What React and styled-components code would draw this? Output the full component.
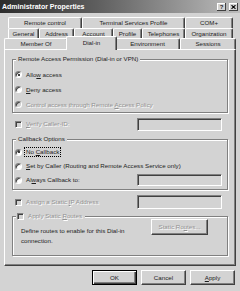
import React from 'react';
import styled, { createGlobalStyle } from 'styled-components';

const GlobalStyle = createGlobalStyle`
  html, body {
    margin: 0;
    padding: 0;
    background: #d3d3d3;
  }
  body {
    font-family: "Liberation Sans", Arial, sans-serif;
  }
`;

const Window = styled.div`
  width: 240px;
  height: 291px;
  overflow: hidden;
  background: #d3d3d3;
  color: #1c1c1c;
  font-size: 6.2px;
  line-height: 8px;
  display: flex;
  flex-direction: column;
`;

/* ── TITLE BAR ── */
const TitleBar = styled.div`
  flex: none;
  height: 13px;
  display: flex;
  align-items: center;
  padding: 0 2px 0 2px;
  background: linear-gradient(to right, #2c2c2c 0%, #5e5e5e 40%, #bdbdbd 100%);
`;

const Title = styled.div`
  flex: 1;
  color: #fff;
  font-weight: bold;
  font-size: 7px;
  white-space: nowrap;
`;

const CaptionButton = styled.div`
  width: 9px;
  height: 8px;
  margin-left: ${p => p.$gap}px;
  box-sizing: border-box;
  background: #d3d3d3;
  box-shadow: inset -1px -1px 0 #404040, inset 1px 1px 0 #fff;
  display: flex;
  align-items: center;
  justify-content: center;
  font-weight: bold;
  font-size: 6px;
  line-height: 6px;
`;

/* ── TABS ── */
const Tabs = styled.div`
  flex: none;
  margin-top: 4px;
  display: flex;
  flex-direction: column;
`;

const TabRow = styled.div`
  display: flex;
  align-items: flex-end;
  height: ${p => p.$h}px;
  margin-left: ${p => p.$inset}px;
`;

const Tab = styled.div`
  flex: none;
  width: ${p => p.$w}px;
  height: 100%;
  box-sizing: border-box;
  display: flex;
  align-items: center;
  justify-content: center;
  white-space: nowrap;
  border-top: 1px solid #fff;
  border-left: 1px solid #fff;
  border-right: 1px solid #404040;
  border-radius: 2px 2px 0 0;
  box-shadow: inset -1px 0 0 #808080;
`;

const ActiveTab = styled(Tab)`
  height: 14px;
  margin: 0 -2px -1px;
  padding-bottom: 1px;
  position: relative;
  z-index: 2;
  background: #d3d3d3;
`;

/* ── PANEL ── */
const Panel = styled.div`
  flex: none;
  margin: 0 4px;
  height: 217px;
  box-sizing: border-box;
  border-top: 1px solid #fff;
  border-left: 1px solid #fff;
  border-right: 1px solid #404040;
  border-bottom: 1px solid #404040;
  box-shadow: inset -1px -1px 0 #808080;
  padding: 0 7px;
  display: flex;
  flex-direction: column;
`;

const GroupBox = styled.div`
  position: relative;
  margin-top: ${p => p.$mt}px;
  padding: ${p => p.$pad};
  border: 1px solid #808080;
  box-shadow: inset 1px 1px 0 #fff, 1px 1px 0 #fff;
  display: flex;
  flex-direction: ${p => (p.$row ? 'row' : 'column')};
  justify-content: space-between;
  align-items: ${p => (p.$row ? 'flex-start' : 'stretch')};
`;

const Legend = styled.div`
  position: absolute;
  top: -5px;
  left: 3px;
  height: 8px;
  padding: 0 ${p => p.$px}px;
  background: #d3d3d3;
  display: flex;
  align-items: center;
  gap: 4px;
  white-space: nowrap;
`;

const OptionRow = styled.div`
  height: ${p => p.$h}px;
  display: flex;
  align-items: center;
  gap: 4px;
  padding-left: ${p => p.$pl}px;
  padding-right: ${p => p.$pr}px;
  margin-top: ${p => p.$mt || 0}px;
  white-space: nowrap;
`;

const Label = styled.span`
  color: ${p => (p.$disabled ? '#929292' : 'inherit')};
  text-shadow: ${p => (p.$disabled ? '1px 1px 0 #fff' : 'none')};
  border: 1px dotted ${p => (p.$focus ? '#000' : 'transparent')};
  padding: 0 1px;
  margin-left: -2px;
`;

const Key = styled.span`
  text-decoration: underline;
`;

const Radio = styled.span`
  flex: none;
  width: 7px;
  height: 7px;
  box-sizing: border-box;
  border-radius: 50%;
  border: 1px solid;
  border-color: #808080 #fff #fff #808080;
  background: ${p => (p.$disabled ? '#d3d3d3' : '#fff')};
  box-shadow: inset 1px 1px 0 #404040;
  display: flex;
  align-items: center;
  justify-content: center;

  &::after {
    content: '';
    width: 2px;
    height: 2px;
    border-radius: 50%;
    background: #000;
    display: ${p => (p.$checked ? 'block' : 'none')};
  }
`;

const Check = styled.span`
  flex: none;
  width: 7px;
  height: 7px;
  box-sizing: border-box;
  border: 1px solid;
  border-color: #808080 #fff #fff #808080;
  background: ${p => (p.$disabled ? '#d3d3d3' : '#fff')};
  box-shadow: inset 1px 1px 0 #404040;
`;

const Field = styled.div`
  flex: none;
  margin-left: auto;
  width: 85px;
  height: ${p => p.$h}px;
  box-sizing: border-box;
  border: 1px solid;
  border-color: #808080 #fff #fff #808080;
  box-shadow: inset 1px 1px 0 #404040;
  background: #d3d3d3;
`;

const RouteText = styled.div`
  margin-top: 7px;
  line-height: 10px;
  width: 110px;
`;

const Button = styled.div`
  flex: none;
  width: ${p => p.$w}px;
  height: ${p => p.$h}px;
  box-sizing: border-box;
  display: flex;
  align-items: center;
  justify-content: center;
  white-space: nowrap;
  background: #d3d3d3;
  border: 1px solid;
  border-color: ${p => (p.$default ? '#000' : '#fff #404040 #404040 #fff')};
  box-shadow: ${p =>
    p.$default
      ? 'inset 1px 1px 0 #fff, inset -1px -1px 0 #404040, inset -2px -2px 0 #808080'
      : 'inset -1px -1px 0 #808080'};
  color: ${p => (p.$disabled ? '#929292' : 'inherit')};
  text-shadow: ${p => (p.$disabled ? '1px 1px 0 #fff' : 'none')};
`;

const ButtonBar = styled.div`
  flex: none;
  margin-top: 4px;
  height: 15px;
  display: flex;
  justify-content: flex-end;
  gap: 4px;
  padding-right: 5px;
`;

const backRow1 = [
  { label: 'Remote control', w: 74 },
  { label: 'Terminal Services Profile', w: 103 },
  { label: 'COM+', w: 48 },
];

const backRow2 = [
  { label: 'General', w: 31 },
  { label: 'Address', w: 35 },
  { label: 'Account', w: 39 },
  { label: 'Profile', w: 29 },
  { label: 'Telephones', w: 43 },
  { label: 'Organization', w: 48 },
];

const frontRow = [
  { label: 'Member Of', w: 64 },
  { label: 'Dial-in', w: 51, active: true },
  { label: 'Environment', w: 65 },
  { label: 'Sessions', w: 56 },
];

const CloseGlyph = () => (
  <svg width="5" height="4" viewBox="0 0 5 4">
    <path d="M0.5 0.2 L4.5 3.8 M4.5 0.2 L0.5 3.8" stroke="#000" strokeWidth="1.1" />
  </svg>
);

const App = () => (
  <Window>
    <GlobalStyle />
    <TitleBar>
      <Title>Administrator Properties</Title>
      <CaptionButton $gap={0}>?</CaptionButton>
      <CaptionButton $gap={3}>
        <CloseGlyph />
      </CaptionButton>
    </TitleBar>

    <Tabs>
      <TabRow $h={11} $inset={8}>
        {backRow1.map(t => (
          <Tab key={t.label} $w={t.w}>{t.label}</Tab>
        ))}
      </TabRow>
      <TabRow $h={10} $inset={8}>
        {backRow2.map(t => (
          <Tab key={t.label} $w={t.w}>{t.label}</Tab>
        ))}
      </TabRow>
      <TabRow $h={11} $inset={4}>
        {frontRow.map(t =>
          t.active ? (
            <ActiveTab key={t.label} $w={t.w}>{t.label}</ActiveTab>
          ) : (
            <Tab key={t.label} $w={t.w}>{t.label}</Tab>
          )
        )}
      </TabRow>
    </Tabs>

    <Panel>
      {/* remote access permission */}
      <GroupBox $mt={9} $pad="7px 0 0 0">
        <Legend $px={2}>Remote Access Permission (Dial-in or VPN)</Legend>
        <OptionRow $h={15} $pl={2}>
          <Radio $checked />
          <Label>Allo<Key>w</Key> access</Label>
        </OptionRow>
        <OptionRow $h={15} $pl={2}>
          <Radio />
          <Label><Key>D</Key>eny access</Label>
        </OptionRow>
        <OptionRow $h={15} $pl={2}>
          <Radio $disabled />
          <Label $disabled>Control access through Remote <Key>A</Key>ccess Policy</Label>
        </OptionRow>
      </GroupBox>

      <OptionRow $h={14} $pl={3} $pr={6} $mt={4}>
        <Check $disabled />
        <Label $disabled><Key>V</Key>erify Caller-ID:</Label>
        <Field $h={13} />
      </OptionRow>

      {/* callback options */}
      <GroupBox $mt={8} $pad="5px 5px 2px 0">
        <Legend $px={2}>Callback Options</Legend>
        <OptionRow $h={14} $pl={2}>
          <Radio $checked />
          <Label $focus>No <Key>C</Key>allback</Label>
        </OptionRow>
        <OptionRow $h={14} $pl={2}>
          <Radio />
          <Label><Key>S</Key>et by Caller (Routing and Remote Access Service only)</Label>
        </OptionRow>
        <OptionRow $h={14} $pl={2}>
          <Radio />
          <Label>Al<Key>w</Key>ays Callback to:</Label>
          <Field $h={12} />
        </OptionRow>
      </GroupBox>

      <OptionRow $h={14} $pl={3} $pr={6} $mt={5}>
        <Check $disabled />
        <Label $disabled>Assign a Static <Key>I</Key>P Address</Label>
        <Field $h={14} />
      </OptionRow>

      {/* static routes */}
      <GroupBox $mt={7} $pad="2px 19px 9px 8px" $row>
        <Legend $px={1}>
          <Check $disabled />
          <Label $disabled>Apply Static <Key>R</Key>outes</Label>
        </Legend>
        <RouteText>Define routes to enable for this Dial-in connection.</RouteText>
        <Button $w={57} $h={16} $disabled>Static Ro<Key>u</Key>tes...</Button>
      </GroupBox>
    </Panel>

    <ButtonBar>
      <Button $w={45} $h={15} $default>OK</Button>
      <Button $w={45} $h={15}>Cancel</Button>
      <Button $w={45} $h={15}><Key>A</Key>pply</Button>
    </ButtonBar>
  </Window>
);

export default App;
